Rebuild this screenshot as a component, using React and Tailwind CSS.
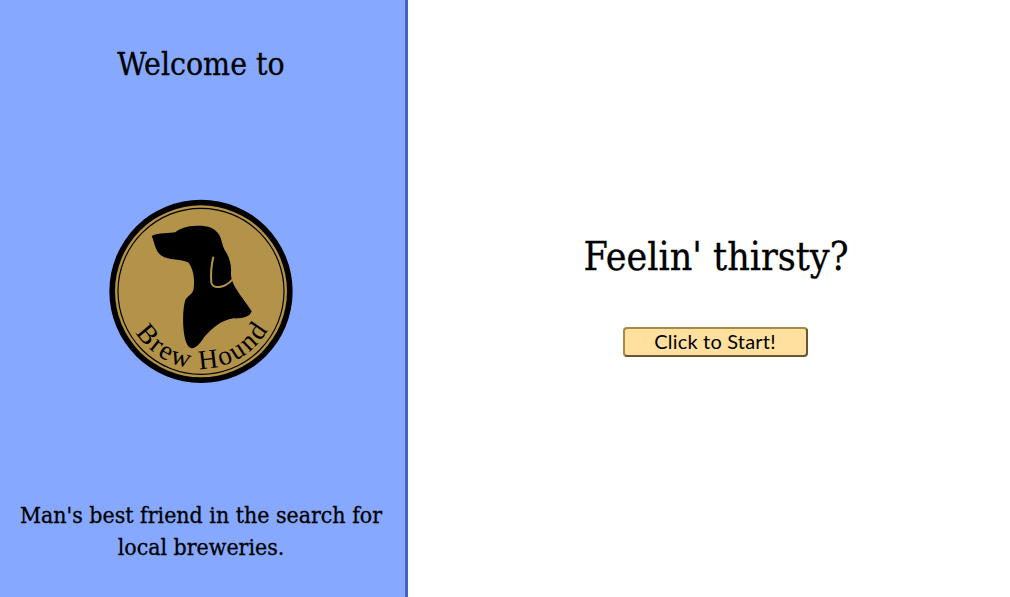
function Logo() {
  return (
    <svg width="200" height="200" viewBox="0 0 600 600" className="block">
      <circle cx="303" cy="304" r="275" fill="#000" />
      <circle cx="303" cy="304" r="258" fill="#b29349" />
      <circle cx="303" cy="304" r="249" fill="none" stroke="#000" strokeWidth="3.5" />
      <path
        d="M155 138 C175 128 210 130 226 127 C238 116 260 107 290 107 C320 106 345 112 358 135 C366 150 366 165 374 180 C388 200 395 225 393 248 C392 262 396 272 402 285 C415 310 440 340 455 364 C450 382 425 386 400 385 C365 390 335 415 312 442 C300 462 285 478 272 474 C258 468 252 440 250 410 C248 380 250 350 256 330 C262 318 280 312 281 295 C284 270 282 240 266 218 C245 205 205 212 185 197 C165 185 165 160 155 138 Z"
        fill="#000"
      />
      <path d="M340 200 C334 225 332 255 334 278 C340 298 372 296 398 268" fill="none" stroke="#b29349" strokeWidth="6" />
      <defs>
        <path id="brew-arc" d="M71 304 A232 232 0 0 0 535 304" />
      </defs>
      <text fontFamily="'Liberation Serif', serif" fontSize="82" fill="#000" letterSpacing="6">
        <textPath href="#brew-arc" startOffset="51%" textAnchor="middle">Brew Hound</textPath>
      </text>
    </svg>
  );
}

export default function App() {
  return (
    <div className="flex h-[597px] w-full font-['DejaVu_Serif_Condensed','DejaVu_Serif',serif] text-black [-webkit-text-stroke:0.3px_black]">
      <div className="flex w-[408px] shrink-0 flex-col items-center border-r-[3px] border-[#4066bc] bg-[#86a9ff] pb-[34px] pr-[3px] pt-[42px]">
        <h2 className="text-[31.7px] leading-[44px]">Welcome to</h2>
        <div className="mt-[104px] self-start pl-[100px]"><Logo /></div>
        <p className="mt-auto w-[380px] text-center text-[22.9px] leading-[32px]">Man's best friend in the search for local breweries.</p>
      </div>
      <div className="flex flex-1 flex-col items-center pl-[14px] pt-[230px]">
        <h1 className="text-[39px] leading-[54px]">Feelin' thirsty?</h1>
        <button className="mr-[2px] mt-[43px] h-[30px] w-[185px] rounded-[4px] border-2 border-[#a8894a] border-b-[#6b5530] border-r-[#6b5530] bg-[#ffe09e] pb-[2px] font-['Lato',sans-serif] text-[20px] leading-none tracking-[0.2px] text-black [-webkit-text-stroke:0]">
          Click to Start!
        </button>
      </div>
    </div>
  );
}
